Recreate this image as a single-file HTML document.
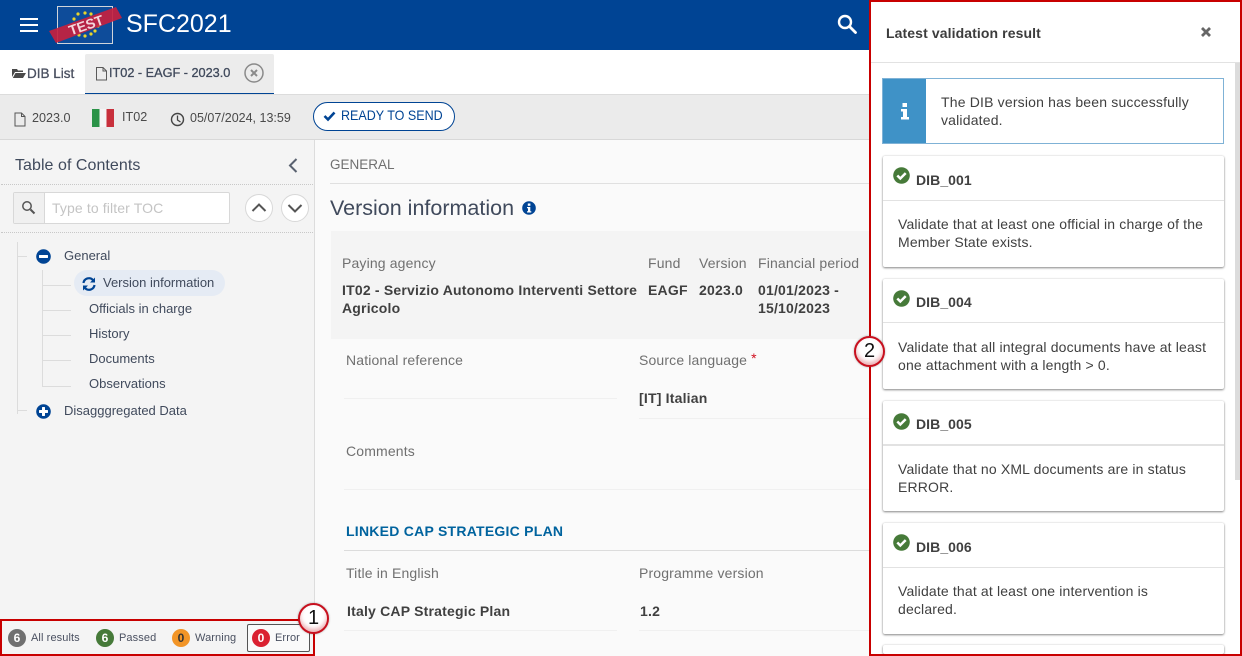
<!DOCTYPE html>
<html><head><meta charset="utf-8">
<style>
html{margin:0;padding:0;width:1242px;height:656px;overflow:hidden}
body{margin:0;padding:0;width:1242px;height:656px;position:relative;overflow:hidden;background:#fafafa;font-family:"Liberation Sans",sans-serif;font-size:14px;color:#404040}
.a{position:absolute;white-space:nowrap}
.b{font-weight:bold}
.l{color:#707070;letter-spacing:.15px}
.box{position:absolute;box-sizing:border-box}
.card{position:absolute;left:883px;width:341px;background:#fff;border-radius:2px;box-shadow:0 1px 2px rgba(0,0,0,.45),0 0 2px rgba(0,0,0,.12)}
.card .hd{position:absolute;left:0;right:0;top:44px;height:1px;background:#e2e2e2}
.card .t{position:absolute;left:33px;top:16px;font-weight:bold;font-size:14px;letter-spacing:.07px;color:#404040;white-space:nowrap}
.card .d{position:absolute;left:15px;top:59px;font-size:14px;line-height:18px;color:#404040;white-space:nowrap;letter-spacing:.16px}
.card svg{position:absolute;left:10px;top:11px}
.tn{font-size:13px;color:#404a5c;position:absolute;white-space:nowrap}
.tl{position:absolute;background:#dcdcdc}
.pill{position:absolute;width:18px;height:18px;border-radius:50%;color:#fff;font-weight:bold;font-size:12px;line-height:18px;text-align:center}
.ft{position:absolute;font-size:11px;color:#4a5060;white-space:nowrap;top:632px;letter-spacing:.1px}
.call{position:absolute;box-sizing:border-box;width:31px;height:31px;border-radius:50%;background:#fff;border:2px solid #c8101e;box-shadow:inset 0 -3px 4px rgba(200,30,40,.35),0 0 2px rgba(0,0,0,.3);color:#111;font-size:20px;line-height:27px;text-align:center}
</style></head><body>

<!-- header -->
<div class="box" style="left:0;top:0;width:1242px;height:50px;background:#004494"></div>
<div class="box" style="left:20px;top:18px;width:18px;height:2.4px;background:#fff"></div>
<div class="box" style="left:20px;top:24px;width:18px;height:2.4px;background:#fff"></div>
<div class="box" style="left:20px;top:30px;width:18px;height:2.4px;background:#fff"></div>
<div class="box" style="left:57px;top:6px;width:56px;height:38px;background:#0e4c9a;border:1px solid #cfd4da"></div>
<svg class="a" style="left:48px;top:0" width="78" height="50" viewBox="0 0 78 50">
<g fill="#e8d52c"><circle cx="30" cy="14" r="1.600"/><circle cx="37" cy="13" r="1.600"/><circle cx="43" cy="14" r="1.600"/><circle cx="26" cy="19" r="1.600"/><circle cx="48" cy="19" r="1.600"/><circle cx="25" cy="25" r="1.600"/><circle cx="50" cy="26" r="1.600"/><circle cx="47" cy="31" r="1.600"/><circle cx="43" cy="34" r="1.600"/><circle cx="37" cy="36" r="1.600"/><circle cx="31" cy="35" r="1.600"/></g>
<polygon points="1,31 68,7 74,18 8,43" fill="#c4213f" opacity=".92"/>
<text x="38" y="30" transform="rotate(-19 38 25)" text-anchor="middle" font-family="Liberation Sans" font-size="14" font-weight="bold" fill="#f3d6dc">TEST</text>
</svg>
<div class="a" style="left:126px;top:9px;font-size:25px;color:#fff;line-height:30px">SFC2021</div>
<svg class="a" style="left:836px;top:13px" width="22" height="22" viewBox="0 0 22 22"><circle cx="9" cy="9" r="6" fill="none" stroke="#fff" stroke-width="2.400"/><path d="M13.500 13.500L19.500 19.500" stroke="#fff" stroke-width="2.800" stroke-linecap="round"/></svg>

<!-- tabs -->
<div class="box" style="left:0;top:50px;width:870px;height:45px;background:#fff"></div>
<svg class="a" style="left:12px;top:67px" width="14" height="12" viewBox="0 0 14 12"><path d="M0 2h5l1 1.500h5V5H3L0 10zM3.500 6H14l-3 5H.8z" fill="#4a4a4a"/></svg>
<div class="a" style="left:27px;top:66px;font-size:13.500px;color:#4a5060;-webkit-text-stroke:.3px #4a5060">DIB List</div>
<div class="box" style="left:85px;top:54px;width:189px;height:41px;background:#ececec;border-radius:2px 2px 0 0;border-bottom:2px solid #004494"></div>
<svg class="a" style="left:95px;top:67px" width="13" height="14" viewBox="0 0 13 14"><path d="M1.500 .5h6.500l3.500 3.500v9h-10zM8 .5V4h3.500" fill="none" stroke="#5a5a5a"/></svg>
<div class="a" style="left:109px;top:66px;font-size:12.700px;color:#404a5c;-webkit-text-stroke:.3px #404a5c">IT02 - EAGF - 2023.0</div>
<svg class="a" style="left:244px;top:63px" width="20" height="20" viewBox="0 0 20 20"><circle cx="10" cy="10" r="9" fill="none" stroke="#8a8a8a" stroke-width="1.500"/><path d="M7 7l6 6M13 7l-6 6" stroke="#8a8a8a" stroke-width="2"/></svg>

<!-- info bar -->
<div class="box" style="left:0;top:94px;width:870px;height:46px;background:#ebebeb;border-top:1px solid #dcdcdc;border-bottom:1px solid #d8d8d8"></div>
<svg class="a" style="left:14px;top:112px" width="12" height="15" viewBox="0 0 12 15"><path d="M1 1h6.500L11 4.500V14H1zM7.500 1v3.500H11" fill="none" stroke="#555" stroke-width="1"/></svg>
<div class="a" style="left:32px;top:111px;font-size:12.600px;color:#4a4a4a">2023.0</div>
<div class="box" style="left:92px;top:109px;width:22px;height:18px;background:linear-gradient(90deg,#2b9348 0 33%,#f5f5f5 33% 66%,#c8303c 66%)"></div>
<div class="a" style="left:122px;top:110px;font-size:12.600px;color:#4a4a4a">IT02</div>
<svg class="a" style="left:170px;top:112px" width="15" height="15" viewBox="0 0 15 15"><circle cx="7.500" cy="7.500" r="6" fill="none" stroke="#444" stroke-width="1.400"/><path d="M7.500 3.500V8l3 2" fill="none" stroke="#444" stroke-width="1.300"/></svg>
<div class="a" style="left:190px;top:111px;font-size:12.500px;color:#4a4a4a">05/07/2024, 13:59</div>
<div class="box" style="left:313px;top:102px;width:142px;height:29px;background:#fff;border:1px solid #004494;border-radius:15px"></div>
<svg class="a" style="left:323px;top:110px" width="13" height="12" viewBox="0 0 13 12"><path d="M1.500 6l3.500 3.500L11.500 2.500" fill="none" stroke="#004494" stroke-width="2.600"/></svg>
<div class="a" style="left:341px;top:107px;font-size:14px;color:#004494;transform:scaleX(.895);transform-origin:left">READY TO SEND</div>

<!-- sidebar -->
<div class="box" style="left:0;top:140px;width:315px;height:516px;background:#f4f4f4;border-right:1px solid #dcdcdc"></div>
<div class="a" style="left:15px;top:157px;font-size:16px;color:#404a5c;letter-spacing:.05px">Table of Contents</div>
<svg class="a" style="left:287px;top:157px" width="12" height="17" viewBox="0 0 12 17"><path d="M9.500 2L3 8.500 9.500 15" fill="none" stroke="#5a6270" stroke-width="2"/></svg>
<div class="box" style="left:1px;top:184px;width:312px;border-top:1px dotted #c8c8c8"></div>
<div class="box" style="left:1px;top:232px;width:312px;border-top:1px dotted #c8c8c8"></div>
<div class="box" style="left:13px;top:192px;width:217px;height:32px;background:#fff;border:1px solid #d8d8d8;border-radius:2px"></div>
<div class="box" style="left:14px;top:193px;width:31px;height:30px;background:#f0f0f0;border-right:1px solid #d8d8d8"></div>
<svg class="a" style="left:21px;top:200px" width="15" height="15" viewBox="0 0 15 15"><circle cx="6" cy="6" r="4.200" fill="none" stroke="#555" stroke-width="1.500"/><path d="M9.500 9.500l4 4" stroke="#555" stroke-width="2"/></svg>
<div class="a" style="left:52px;top:200px;font-size:14px;color:#c4c4c4;letter-spacing:.12px">Type to filter TOC</div>
<svg class="a" style="left:244px;top:194px" width="66" height="28" viewBox="0 0 66 28"><circle cx="15" cy="14" r="13.500" fill="#fff" stroke="#d8d8d8"/><circle cx="51" cy="14" r="13.500" fill="#fff" stroke="#d8d8d8"/><path d="M8.500 17l6.500-6.500 6.500 6.500" fill="none" stroke="#555" stroke-width="2"/><path d="M44.500 11l6.500 6.500 6.500-6.500" fill="none" stroke="#555" stroke-width="2"/></svg>

<div class="tl" style="left:17px;top:242px;width:1px;height:172px"></div>
<div class="tl" style="left:18px;top:256px;width:9px;height:1px"></div>
<div class="tl" style="left:18px;top:410px;width:9px;height:1px"></div>
<div class="tl" style="left:42px;top:270px;width:1px;height:117px"></div>
<div class="tl" style="left:43px;top:285px;width:28px;height:1px"></div>
<div class="tl" style="left:43px;top:310px;width:28px;height:1px"></div>
<div class="tl" style="left:43px;top:335px;width:28px;height:1px"></div>
<div class="tl" style="left:43px;top:360px;width:28px;height:1px"></div>
<div class="tl" style="left:43px;top:386px;width:28px;height:1px"></div>
<svg class="a" style="left:36px;top:249px" width="15" height="15" viewBox="0 0 15 15"><circle cx="7.500" cy="7.500" r="7.300" fill="#004494"/><rect x="3" y="6" width="9" height="3" rx=".6" fill="#fff"/></svg>
<svg class="a" style="left:36px;top:404px" width="15" height="15" viewBox="0 0 15 15"><circle cx="7.500" cy="7.500" r="7.300" fill="#004494"/><rect x="3" y="6" width="9" height="3" rx=".6" fill="#fff"/><rect x="6" y="3" width="3" height="9" rx=".6" fill="#fff"/></svg>
<div class="tn" style="left:64px;top:248px">General</div>
<div class="box" style="left:74px;top:270px;width:151px;height:26px;background:#e5ebf4;border-radius:13px"></div>
<svg class="a" style="left:82px;top:277px" width="14" height="14" viewBox="0 0 14 14"><path d="M1.500 6A5.500 5.500 0 0 1 11 3M12.500 8A5.500 5.500 0 0 1 3 11" fill="none" stroke="#004494" stroke-width="2.200"/><path d="M13 .5V5.500H8zM1 13.500V8.500H6z" fill="#004494"/></svg>
<div class="tn" style="left:103px;top:275px">Version information</div>
<div class="tn" style="left:89px;top:301px">Officials in charge</div>
<div class="tn" style="left:89px;top:326px">History</div>
<div class="tn" style="left:89px;top:351px">Documents</div>
<div class="tn" style="left:89px;top:376px">Observations</div>
<div class="tn" style="left:64px;top:403px">Disagggregated Data</div>

<!-- sidebar footer -->
<div class="box" style="left:0;top:619px;width:315px;height:37px;border:2px solid #c80000"></div>
<div class="pill" style="left:8px;top:629px;background:#707070">6</div>
<div class="ft" style="left:31px">All results</div>
<div class="pill" style="left:96px;top:629px;background:#467a39">6</div>
<div class="ft" style="left:119px">Passed</div>
<div class="pill" style="left:172px;top:629px;background:#f29527;color:#333">0</div>
<div class="ft" style="left:195px">Warning</div>
<div class="box" style="left:247px;top:624px;width:63px;height:28px;border:1px solid #555;border-radius:2px;background:#fafafa"></div>
<div class="pill" style="left:252px;top:629px;background:#da2131">0</div>
<div class="ft" style="left:275px">Error</div>

<!-- main -->
<div class="box" style="left:315px;top:140px;width:555px;height:516px;background:#fafafa"></div>
<div class="a" style="left:330px;top:157px;font-size:13.500px;color:#707070">GENERAL</div>
<div class="box" style="left:330px;top:183px;width:540px;height:1px;background:#e0e0e0"></div>
<div class="a" style="left:330px;top:195px;font-size:21.500px;color:#404a5c;line-height:26px">Version information</div>
<svg class="a" style="left:522px;top:201px" width="14" height="14" viewBox="0 0 14 14"><circle cx="7" cy="7" r="6.800" fill="#004494"/><rect x="5.800" y="2.500" width="2.600" height="2.300" fill="#fff"/><path d="M5 6h3.300v4.200h1v1.300H5v-1.300h1V7.300H5z" fill="#fff"/></svg>

<div class="box" style="left:331px;top:231px;width:539px;height:108px;background:#f4f4f4"></div>
<div class="a l" style="left:342px;top:255px">Paying agency</div>
<div class="a l" style="left:648px;top:255px">Fund</div>
<div class="a l" style="left:699px;top:255px">Version</div>
<div class="a l" style="left:758px;top:255px">Financial period</div>
<div class="a b" style="left:342px;top:281px;line-height:18px;letter-spacing:.2px">IT02 - Servizio Autonomo Interventi Settore<br>Agricolo</div>
<div class="a b" style="left:648px;top:281px;line-height:18px;letter-spacing:.2px">EAGF</div>
<div class="a b" style="left:699px;top:281px;line-height:18px;letter-spacing:.2px">2023.0</div>
<div class="a b" style="left:758px;top:281px;line-height:18px;letter-spacing:.2px">01/01/2023 -<br>15/10/2023</div>

<div class="a l" style="left:346px;top:352px">National reference</div>
<div class="box" style="left:344px;top:398px;width:273px;height:1px;background:#f0f0f0"></div>
<div class="a l" style="left:639px;top:352px">Source language <span style="color:#d01020;position:relative;top:-2px">*</span></div>
<div class="a b" style="left:639px;top:390px;letter-spacing:.2px">[IT] Italian</div>
<div class="box" style="left:639px;top:418px;width:231px;height:1px;background:#f0f0f0"></div>
<div class="a l" style="left:346px;top:443px">Comments</div>
<div class="box" style="left:344px;top:489px;width:526px;height:1px;background:#f0f0f0"></div>
<div class="a b" style="left:346px;top:523px;color:#00639e;letter-spacing:.25px">LINKED CAP STRATEGIC PLAN</div>
<div class="box" style="left:344px;top:550px;width:526px;height:1px;background:#dcdcdc"></div>
<div class="a l" style="left:346px;top:565px">Title in English</div>
<div class="a l" style="left:639px;top:565px">Programme version</div>
<div class="a b" style="left:347px;top:603px;letter-spacing:.2px">Italy CAP Strategic Plan</div>
<div class="a b" style="left:640px;top:603px;letter-spacing:.2px">1.2</div>
<div class="box" style="left:344px;top:630px;width:273px;height:1px;background:#f0f0f0"></div>
<div class="box" style="left:639px;top:630px;width:231px;height:1px;background:#f0f0f0"></div>

<!-- right panel -->
<div class="box" style="left:869px;top:0;width:373px;height:656px;background:#fff;border:2px solid #c80000"></div>
<div class="a b" style="left:886px;top:25px;font-size:14px;color:#3c3c3c;letter-spacing:.1px">Latest validation result</div>
<svg class="a" style="left:1201px;top:27px" width="10" height="10" viewBox="0 0 10 10"><path d="M1 1l8 8M9 1l-8 8" stroke="#666" stroke-width="2.800"/></svg>
<div class="box" style="left:871px;top:62px;width:369px;height:1px;background:#e2e2e2"></div>
<div class="box" style="left:1235px;top:63px;width:5px;height:417px;background:#dcdcdc"></div>

<div class="box" style="left:882px;top:78px;width:342px;height:66px;background:#fff;border:1px solid #7fb2d6"></div>
<div class="box" style="left:883px;top:79px;width:43px;height:64px;background:#3f92c7"></div>
<svg class="a" style="left:900px;top:102px" width="10" height="18" viewBox="0 0 10 18"><rect x="2.500" y="1" width="4.500" height="4" fill="#fff"/><path d="M1 7h6v8h2v2.500H1V15h2V9.500H1z" fill="#fff"/></svg>
<div class="a" style="left:941px;top:93px;line-height:18px;letter-spacing:.18px">The DIB version has been successfully<br>validated.</div>

<div class="card" style="top:156px;height:111px"><svg width="17" height="17" viewBox="0 0 17 17"><circle cx="8.500" cy="8.500" r="8.300" fill="#467a39"/><path d="M4.300 8.500l3 3 5.400-5.400" fill="none" stroke="#fff" stroke-width="2.500"/></svg><div class="t">DIB_001</div><div class="hd"></div><div class="d">Validate that at least one official in charge of the<br>Member State exists.</div></div>

<div class="card" style="top:279px;height:110px"><svg width="17" height="17" viewBox="0 0 17 17"><circle cx="8.500" cy="8.500" r="8.300" fill="#467a39"/><path d="M4.300 8.500l3 3 5.400-5.400" fill="none" stroke="#fff" stroke-width="2.500"/></svg><div class="t" style="top:15px">DIB_004</div><div class="hd" style="top:43px"></div><div class="d">Validate that all integral documents have at least<br>one attachment with a length &gt; 0.</div></div>

<div class="card" style="top:401px;height:110px"><svg style="top:12px" width="17" height="17" viewBox="0 0 17 17"><circle cx="8.500" cy="8.500" r="8.300" fill="#467a39"/><path d="M4.300 8.500l3 3 5.400-5.400" fill="none" stroke="#fff" stroke-width="2.500"/></svg><div class="t" style="top:15px">DIB_005</div><div class="hd" style="top:43px;height:2px"></div><div class="d">Validate that no XML documents are in status<br>ERROR.</div></div>

<div class="card" style="top:523px;height:111px"><svg width="17" height="17" viewBox="0 0 17 17"><circle cx="8.500" cy="8.500" r="8.300" fill="#467a39"/><path d="M4.300 8.500l3 3 5.400-5.400" fill="none" stroke="#fff" stroke-width="2.500"/></svg><div class="t">DIB_006</div><div class="hd"></div><div class="d">Validate that at least one intervention is<br>declared.</div></div>

<div class="card" style="top:645px;height:9px"></div>
<div class="box" style="left:869px;top:654px;width:373px;height:2px;background:#c80000"></div>

<div class="call" style="left:298px;top:603px">1</div>
<div class="call" style="left:854px;top:336px">2</div>
</body></html>
